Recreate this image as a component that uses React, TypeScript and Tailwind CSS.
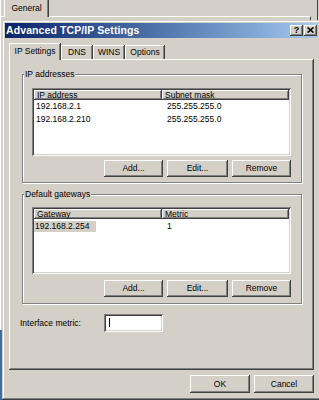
import React from "react";

const RAISED =
  "shadow-[inset_-1px_-1px_0_#404040,inset_1px_1px_0_#ffffff,inset_-2px_-2px_0_#808080,inset_2px_2px_0_#d4d0c8]";
const SUNKEN =
  "shadow-[inset_1px_1px_0_#808080,inset_-1px_-1px_0_#ffffff,inset_2px_2px_0_#404040,inset_-2px_-2px_0_#d4d0c8]";
const PANEL =
  "shadow-[inset_-1px_-1px_0_#404040,inset_1px_1px_0_#ffffff,inset_-2px_-2px_0_#808080]";
const TAB =
  "shadow-[inset_-1px_0_0_#404040,inset_1px_1px_0_#ffffff,inset_-2px_0_0_#808080]";
const TAB_SIDES =
  "shadow-[inset_-1px_0_0_#404040,inset_1px_0_0_#ffffff,inset_-2px_0_0_#808080]";
const GROUP =
  "border border-[#808080] shadow-[1px_1px_0_#ffffff,inset_1px_1px_0_#ffffff]";

function Button({ className, children }: { className: string; children: React.ReactNode }) {
  return (
    <div className={`${RAISED} ${className} bg-[#d4d0c8] flex items-center justify-center text-black`}>
      {children}
    </div>
  );
}

function ListButtons() {
  return (
    <div className="w-[259px] flex justify-end gap-[4px]">
      <Button className="w-[59px] h-[17px]">Add...</Button>
      <Button className="w-[61px] h-[17px]">Edit...</Button>
      <Button className="w-[59px] h-[17px]">Remove</Button>
    </div>
  );
}

export default function App() {
  return (
    <div className="relative w-[319px] h-[400px] overflow-hidden bg-[#d4d0c8] font-['Liberation_Sans',Arial,sans-serif] text-[8.5px] leading-none text-black select-none">
      {/* window behind */}
      <div className="absolute left-0 top-0 w-[1px] h-[330px] bg-white" />
      <div className="absolute left-0 top-[330px] w-[2px] h-[70px] bg-[#3a6ea5]" />
      <div className="absolute left-0 top-[16px] w-[311px] h-[6px] border-t border-t-white border-r border-r-[#404040]" />
      <div className={`absolute left-[4px] top-0 w-[45px] h-[17px] bg-[#d4d0c8] ${TAB_SIDES} flex items-center justify-center`}>
        General
      </div>
      <div className="absolute left-[317px] top-0 w-[1px] h-[20px] bg-[#404040]" />

      {/* dialog */}
      <div className="absolute left-[2px] top-[20px] w-[319px] h-[380px] bg-[#d4d0c8] p-[3px] flex flex-col shadow-[inset_-1px_-1px_0_#404040,inset_1px_1px_0_#d4d0c8,inset_-2px_-2px_0_#808080,inset_2px_2px_0_#ffffff]">
        {/* title bar */}
        <div className="h-[15px] shrink-0 flex items-center bg-linear-to-r from-[#0a246a] to-[#a6caf0] pl-[1px] pr-[1px]">
          <span className="font-bold text-white text-[10.5px] leading-none tracking-[0.1px]">Advanced TCP/IP Settings</span>
          <div className="ml-auto flex gap-[1px]">
            <div className={`${RAISED} bg-[#d4d0c8] w-[13px] h-[11px] flex items-center justify-center font-bold text-[9px] pb-[1px]`}>
              ?
            </div>
            <div className={`${RAISED} bg-[#d4d0c8] w-[13px] h-[11px] flex items-center justify-center pb-[1px]`}>
              <svg width="7" height="6" viewBox="0 0 7 6">
                <path d="M0.6 0.4 L6.4 5.6 M6.4 0.4 L0.6 5.6" stroke="#000" strokeWidth="1.5" fill="none" />
              </svg>
            </div>
          </div>
        </div>

        {/* tabs */}
        <div className="mt-[5px] px-[4px] flex items-end h-[16px] shrink-0">
          <div className={`${TAB} relative z-10 mb-[-1px] w-[52px] h-[17px] bg-[#d4d0c8] flex items-center justify-center`}>
            IP Settings
          </div>
          <div className={`${TAB} w-[32px] h-[14px] bg-[#d4d0c8] flex items-center justify-center`}>DNS</div>
          <div className={`${TAB} w-[32px] h-[14px] bg-[#d4d0c8] flex items-center justify-center`}>WINS</div>
          <div className={`${TAB} w-[40px] h-[14px] bg-[#d4d0c8] flex items-center justify-center`}>Options</div>
        </div>

        {/* tab page */}
        <div className={`${PANEL} mx-[4px] h-[311px] shrink-0 bg-[#d4d0c8] pt-[15px] pl-[11px] flex flex-col`}>
          {/* IP addresses */}
          <div className={`relative ml-[2px] w-[280px] h-[109px] ${GROUP} pt-[13px] pl-[9px] flex flex-col`}>
            <div className="absolute left-[1px] top-[-6px] h-[11px] px-[1px] bg-[#d4d0c8] flex items-center">
              IP addresses
            </div>
            <div className={`${SUNKEN} w-[259px] h-[68px] bg-white p-[2px] flex flex-col`}>
              <div className="flex h-[10px] shrink-0">
                <div className={`${PANEL} w-[128px] bg-[#d4d0c8] pl-[3px] flex items-center`}>IP address</div>
                <div className={`${PANEL} flex-1 bg-[#d4d0c8] pl-[3px] flex items-center`}>Subnet mask</div>
              </div>
              <div className="flex h-[13px] items-center">
                <div className="w-[128px] pl-[2px]">192.168.2.1</div>
                <div className="pl-[5px]">255.255.255.0</div>
              </div>
              <div className="flex h-[13px] items-center">
                <div className="w-[128px] pl-[2px]">192.168.2.210</div>
                <div className="pl-[5px]">255.255.255.0</div>
              </div>
            </div>
            <div className="mt-[4px]">
              <ListButtons />
            </div>
          </div>

          {/* Default gateways */}
          <div className={`relative ml-[2px] mt-[11px] w-[280px] h-[110px] ${GROUP} pt-[12px] pl-[9px] flex flex-col`}>
            <div className="absolute left-[1px] top-[-6px] h-[11px] px-[1px] bg-[#d4d0c8] flex items-center">
              Default gateways
            </div>
            <div className={`${SUNKEN} w-[259px] h-[67px] bg-white p-[2px] flex flex-col`}>
              <div className="flex h-[10px] shrink-0">
                <div className={`${PANEL} w-[128px] bg-[#d4d0c8] pl-[3px] flex items-center`}>Gateway</div>
                <div className={`${PANEL} flex-1 bg-[#d4d0c8] pl-[3px] flex items-center`}>Metric</div>
              </div>
              <div className="flex h-[13px] items-end">
                <div className="w-[128px]">
                  <div className="w-[62px] h-[11px] bg-[#d4d0c8] pl-[1px] flex items-center">192.168.2.254</div>
                </div>
                <div className="pl-[5px] h-[11px] flex items-center">1</div>
              </div>
            </div>
            <div className="mt-[6px]">
              <ListButtons />
            </div>
          </div>

          {/* Interface metric */}
          <div className="mt-[10px] flex items-center h-[18px]">
            <div className="w-[84px]">Interface metric:</div>
            <div className={`${SUNKEN} relative w-[59px] h-[18px] bg-white`}>
              <div className="absolute left-[5px] top-[4px] w-[1px] h-[9px] bg-black" />
            </div>
          </div>
        </div>

        {/* dialog buttons */}
        <div className="mt-[5px] pr-[4px] flex justify-end gap-[4px]">
          <Button className="w-[60px] h-[18px]">OK</Button>
          <Button className="w-[60px] h-[18px]">Cancel</Button>
        </div>
      </div>
    </div>
  );
}
